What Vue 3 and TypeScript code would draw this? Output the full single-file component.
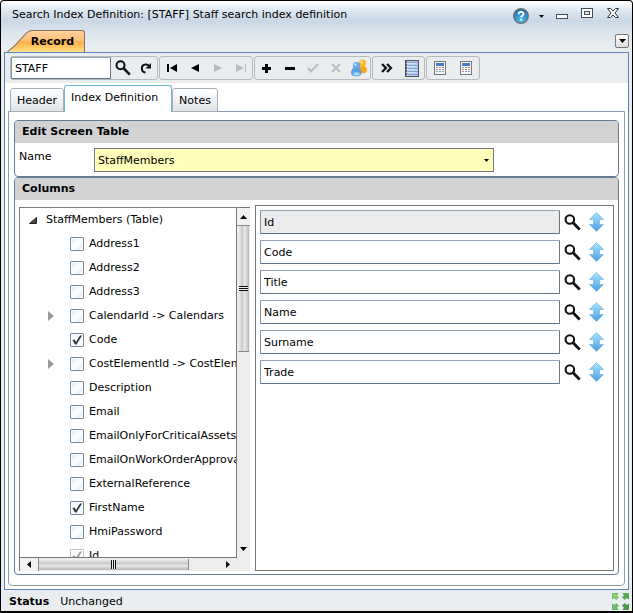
<script setup lang="ts">
import { ref } from 'vue'

interface Column {
  name: string
  checked?: boolean
  expandable?: boolean
  disabled?: boolean
}

const code = ref('STAFF')
const table = ref('StaffMembers')
const tabs = ['Header', 'Index Definition', 'Notes']
const activeTab = ref('Index Definition')

const columns = ref<Column[]>([
  { name: 'Address1' },
  { name: 'Address2' },
  { name: 'Address3' },
  { name: 'CalendarId -> Calendars', expandable: true },
  { name: 'Code', checked: true },
  { name: 'CostElementId -> CostElements', expandable: true },
  { name: 'Description' },
  { name: 'Email' },
  { name: 'EmailOnlyForCriticalAssets' },
  { name: 'EmailOnWorkOrderApproval' },
  { name: 'ExternalReference' },
  { name: 'FirstName', checked: true },
  { name: 'HmiPassword' },
  { name: 'Id', checked: true, disabled: true },
])

const fields = ref(['Id', 'Code', 'Title', 'Name', 'Surname', 'Trade'])
</script>

<template>
  <div class="window">
    <svg class="defs" aria-hidden="true">
      <defs>
        <linearGradient id="arrowFill" x1="0" y1="0" x2="0" y2="1">
          <stop offset="0" stop-color="#a8e6fb" />
          <stop offset="1" stop-color="#4f9be0" />
        </linearGradient>
        <linearGradient id="tabFill" x1="0" y1="0" x2="0" y2="1">
          <stop offset="0" stop-color="#ffd3a2" />
          <stop offset="0.5" stop-color="#ffbe72" />
          <stop offset="0.52" stop-color="#ffad48" />
          <stop offset="1" stop-color="#ffdf80" />
        </linearGradient>
        <radialGradient id="helpFill" cx="0.5" cy="0.8" r="0.8">
          <stop offset="0" stop-color="#4fc0f0" />
          <stop offset="1" stop-color="#1d68ad" />
        </radialGradient>
        <symbol id="lens" viewBox="0 0 16 16">
          <circle cx="5.5" cy="5.2" r="4" fill="none" stroke="#111" stroke-width="2" />
          <path d="M8.5 8.2L14.8 14.6" stroke="#111" stroke-width="2.6" />
        </symbol>
        <symbol id="calc" viewBox="0 0 12 14">
          <rect x="0.5" y="0.5" width="11" height="13" fill="#f6f6f6" stroke="#777" />
          <rect x="2" y="2" width="8" height="3" fill="#4779c4" />
          <g fill="#999">
            <path d="M2 6h2v1h-2zM5 6h2v1h-2zM2 8h2v1h-2zM5 8h2v1h-2zM8 8h2v1h-2zM2 10h2v1h-2zM5 10h2v1h-2zM8 10h2v1h-2z" />
          </g>
          <path d="M8 6h2v1h-2z" fill="#e0563c" />
        </symbol>
      </defs>
    </svg>

    <header class="titlebar">
      <h1>Search Index Definition: [STAFF] Staff search index definition</h1>
      <div class="window-buttons">
        <button type="button" class="help" aria-label="Help">
          <svg width="16" height="16" viewBox="0 0 16 16">
            <circle cx="8" cy="8" r="7.3" fill="url(#helpFill)" stroke="#6b7177" stroke-width="1.4" />
            <path d="M5.6 6.2C5.6 3 10.5 3.2 10.4 6c0 1.7-2.3 1.7-2.3 3.6" fill="none" stroke="#fff" stroke-width="1.8" />
            <path d="M7.1 10.7h2v1.9h-2z" fill="#fff" />
          </svg>
        </button>
        <button type="button" class="help-menu" aria-label="Help menu">
          <svg width="5" height="3" viewBox="0 0 5 3"><path d="M0 0h5L2.5 3z" /></svg>
        </button>
        <button type="button" class="minimise" aria-label="Minimise">
          <svg width="12" height="5" viewBox="0 0 12 5"><rect x="0.5" y="0.5" width="11" height="4" fill="#fff" stroke="#454b5c" /></svg>
        </button>
        <button type="button" class="maximise" aria-label="Maximise">
          <svg width="12" height="10" viewBox="0 0 12 10">
            <rect x="0.5" y="0.5" width="11" height="9" fill="#fff" stroke="#454b5c" />
            <rect x="3.5" y="3.5" width="5" height="3" fill="#dde5ee" stroke="#454b5c" />
          </svg>
        </button>
        <button type="button" class="close" aria-label="Close">
          <svg width="12" height="10" viewBox="0 0 12 10">
            <path d="M.5.5h3L6 3 8.500.5h3L8 5l3.500 4.500h-3L6 7 3.500 9.500h-3L4 5z" fill="#fff" stroke="#30333c" />
          </svg>
        </button>
      </div>
    </header>

    <nav class="record-tabs">
      <button type="button" class="record-tab">
        <svg viewBox="0 0 77 23" preserveAspectRatio="none" aria-hidden="true">
          <path d="M0.500 22.500C5 20 9 15 15 8C19 3 21 0.500 25 0.500H74Q76.500 0.500 76.500 3V23" fill="url(#tabFill)" stroke="#8a6f58" />
        </svg>
        <span>Record</span>
      </button>
      <button type="button" class="tab-menu" aria-label="Open tabs">
        <svg width="7" height="4" viewBox="0 0 7 4"><path d="M0 0h7L3.500 4z" /></svg>
      </button>
    </nav>

    <main class="panel">
      <div class="toolbar">
        <div class="group">
          <input v-model="code" class="box code" aria-label="Code" />
          <button type="button" aria-label="Search"><svg width="16" height="16"><use href="#lens" /></svg></button>
          <button type="button" aria-label="Refresh">
            <svg width="12" height="12" viewBox="0 0 12 12">
              <path d="M5.500 10.500C.800 10 .500 3 5.500 2.400C7.500 2.200 8.500 3.300 9 4.200" fill="none" stroke="#111" stroke-width="2" />
              <path d="M11 1v5.500H5.500z" fill="#111" />
            </svg>
          </button>
        </div>
        <div class="group">
          <button type="button" aria-label="First">
            <svg width="10" height="8" viewBox="0 0 10 8"><path d="M0 0h2v8H0zM10 0v8L3 4z" /></svg>
          </button>
          <button type="button" aria-label="Previous">
            <svg width="8" height="8" viewBox="0 0 8 8"><path d="M8 0v8L0 4z" /></svg>
          </button>
          <button type="button" disabled aria-label="Next">
            <svg width="8" height="8" viewBox="0 0 8 8"><path d="M0 0v8l8-4z" /></svg>
          </button>
          <button type="button" disabled aria-label="Last">
            <svg width="10" height="8" viewBox="0 0 10 8"><path d="M9 0h1v8H9zM0 0v8l8-4z" /></svg>
          </button>
        </div>
        <div class="group">
          <button type="button" aria-label="Add">
            <svg width="9" height="9" viewBox="0 0 9 9"><path d="M3 0h3v3h3v3H6v3H3V6H0V3h3z" /></svg>
          </button>
          <button type="button" aria-label="Remove">
            <svg width="10" height="3" viewBox="0 0 10 3"><path d="M0 0h10v3H0z" /></svg>
          </button>
          <button type="button" disabled aria-label="Accept">
            <svg width="12" height="10" viewBox="0 0 12 10"><path d="M1 5l3 3.500L11 1" fill="none" stroke="#b9bcbe" stroke-width="2" /></svg>
          </button>
          <button type="button" disabled aria-label="Cancel">
            <svg width="10" height="10" viewBox="0 0 10 10"><path d="M1 1l8 8M9 1L1 9" stroke="#b9bcbe" stroke-width="1.800" /></svg>
          </button>
          <button type="button" aria-label="Users">
            <svg width="18" height="18" viewBox="0 0 18 18">
              <path d="M8 13c0-5 2-6 4.500-6S17 8 17 11s-3 3.500-6 3z" fill="#f5a623" />
              <circle cx="12.500" cy="4" r="3.600" fill="#ffb62e" />
              <circle cx="11.700" cy="3" r="1.500" fill="#ffd880" />
              <path d="M1 14c0-4 2-5.500 5-5.500s5.500 1.500 5.500 5.500c0 4.500-10.500 4.500-10.500 0z" fill="#5a9fe4" />
              <path d="M3 15c1-2.500 6-2.500 7 0-1 2.300-6 2.300-7 0z" fill="#a9dcfb" />
              <circle cx="6.500" cy="6.500" r="3.600" fill="#5fa6ea" />
              <circle cx="5.500" cy="5.500" r="1.600" fill="#a8d4fa" />
            </svg>
          </button>
        </div>
        <div class="group wide">
          <button type="button" aria-label="More">
            <svg width="12" height="10" viewBox="0 0 12 10"><path d="M1 1l4 4-4 4M6 1l4 4-4 4" fill="none" stroke="#111" stroke-width="2.200" /></svg>
          </button>
          <button type="button" aria-label="Notebook">
            <svg width="14" height="17" viewBox="0 0 14 17">
              <rect x="0.500" y="0.500" width="13" height="16" fill="#b4cdf0" stroke="#4e5358" />
              <path d="M3 2.500h10M3 5.500h10M3 8.500h10M3 11.500h10M3 14.500h10" stroke="#83a3d3" />
              <path d="M3 3.500h7M3 6.500h7M3 9.500h7M3 12.500h7" stroke="#d9e7fb" />
              <path d="M1.500 1v15" stroke="#555" stroke-dasharray="2 1" />
            </svg>
          </button>
        </div>
        <div class="group wider">
          <button type="button" aria-label="Calculate"><svg width="12" height="14"><use href="#calc" /></svg></button>
          <button type="button" aria-label="Calculate all"><svg width="12" height="14"><use href="#calc" /></svg></button>
        </div>
      </div>

      <div class="tabs" role="tablist">
        <button
          v-for="tab in tabs"
          :key="tab"
          type="button"
          role="tab"
          :aria-selected="tab === activeTab"
          :class="['tab', { active: tab === activeTab }]"
          @click="activeTab = tab"
        >{{ tab }}</button>
      </div>

      <div class="page">
        <section class="card">
          <h2>Edit Screen Table</h2>
          <div class="name-row">
            <label for="table-name">Name</label>
            <div class="select">
              <select id="table-name" v-model="table">
                <option>StaffMembers</option>
              </select>
              <svg width="5" height="3" viewBox="0 0 5 3" aria-hidden="true"><path d="M0 0h5L2.500 3z" /></svg>
            </div>
          </div>
        </section>

        <section class="card grow">
          <h2>Columns</h2>
          <div class="columns">
            <div class="tree">
              <ul class="nodes">
                <li class="root">
                  <svg width="8" height="7" viewBox="0 0 8 7" aria-hidden="true"><path d="M7.500.500v6h-7z" fill="#444" stroke="#222" /></svg>
                  <span>StaffMembers (Table)</span>
                </li>
                <li v-for="column in columns" :key="column.name">
                  <span class="twisty">
                    <svg v-if="column.expandable" width="6" height="10" viewBox="0 0 6 10" aria-hidden="true"><path d="M0 0l6 5-6 5z" fill="#999" /></svg>
                  </span>
                  <label>
                    <input v-model="column.checked" type="checkbox" :disabled="column.disabled" />
                    {{ column.name }}
                  </label>
                </li>
              </ul>
              <div class="scroll vertical" aria-hidden="true">
                <span class="arrow"><svg width="7" height="4" viewBox="0 0 7 4"><path d="M0 4h7L3.500 0z" /></svg></span>
                <span class="thumb"><i></i></span>
                <span class="track"></span>
                <span class="arrow plain"><svg width="7" height="4" viewBox="0 0 7 4"><path d="M0 0h7L3.500 4z" /></svg></span>
              </div>
              <div class="scroll horizontal" aria-hidden="true">
                <span class="arrow"><svg width="4" height="7" viewBox="0 0 4 7"><path d="M4 0v7L0 3.500z" /></svg></span>
                <span class="thumb"><i></i></span>
                <span class="track"></span>
                <span class="arrow plain"><svg width="4" height="7" viewBox="0 0 4 7"><path d="M0 0v7l4-3.500z" /></svg></span>
              </div>
            </div>

            <div class="fields">
              <div v-for="(field, i) in fields" :key="i" class="field">
                <input v-model="fields[i]" class="box" :readonly="i === 0" :aria-label="'Column ' + (i + 1)" />
                <button type="button" aria-label="Find column"><svg width="17" height="17"><use href="#lens" /></svg></button>
                <button type="button" class="move" aria-label="Move column">
                  <svg width="15" height="20" viewBox="0 0 15 20">
                    <path d="M7.500.500L14.500 7.500H10.500V12.500H14.500L7.500 19.500L.500 12.500H4.500V7.500H.500z" fill="url(#arrowFill)" stroke="#78bce6" stroke-width="0.800" />
                  </svg>
                </button>
              </div>
            </div>
          </div>
        </section>
      </div>
    </main>

    <footer class="status">
      <strong>Status</strong>
      <span>Unchanged</span>
      <button type="button" aria-label="Full screen">
        <svg width="17" height="17" viewBox="0 0 17 17" stroke-width="0.600">
          <path d="M.500.500h5.500L4.500 2.200l2 2L4.200 6.500l-2-2L.500 6z" fill="#7cd46c" stroke="#4ca04a" />
          <path d="M16.500.500v5.500l-1.700-1.500-2 2L10.500 4.200l2-2L11 .500z" fill="#55ad52" stroke="#38833c" />
          <path d="M.500 16.500V11l1.700 1.500 2-2 2.300 2.300-2 2L6 16.500z" fill="#6fc267" stroke="#43924a" />
          <path d="M16.500 16.500H11l1.500-1.700-2-2 2.300-2.300 2 2L16.500 11z" fill="#459a49" stroke="#2b6f35" />
        </svg>
      </button>
    </footer>
  </div>
</template>

<style>
html,
body,
#app {
  height: 100%;
  margin: 0;
}
</style>

<style scoped>
* {
  box-sizing: border-box;
}

.window {
  height: 100%;
  min-height: 480px;
  display: flex;
  flex-direction: column;
  padding: 0 3px;
  border: 1px solid #000;
  border-bottom-width: 2px;
  border-radius: 4px 4px 0 0;
  background: linear-gradient(#fff 0, #dce6f0 10px, #c9d7e5 20px, #dbe4ec 30px, #e9edf0 46px);
  font: 11px/14px "DejaVu Sans", Verdana, sans-serif;
  color: #000;
  overflow: hidden;
}

.defs {
  position: absolute;
  width: 0;
  height: 0;
}

svg {
  display: block;
}

button,
input,
select {
  margin: 0;
  font: inherit;
  color: inherit;
}

button {
  display: flex;
  align-items: center;
  justify-content: center;
  padding: 0;
  border: 0;
  background: none;
}

h1,
h2 {
  margin: 0;
  font-size: 11px;
}

.titlebar {
  display: flex;
  justify-content: space-between;
  height: 29px;
  flex: none;
  padding: 7px 10px 0 8px;
}

h1 {
  font-weight: normal;
  white-space: nowrap;
}

.window-buttons {
  display: flex;
  align-items: flex-start;
}

.help-menu {
  margin: 7px 12px 0 10px;
}

.minimise {
  margin: 6px 13px 0 0;
}

.maximise {
  margin: 0 14px 0 0;
}

.record-tabs {
  display: flex;
  justify-content: space-between;
  align-items: flex-end;
  flex: none;
  height: 22px;
  padding-left: 3px;
}

.record-tab {
  position: relative;
  width: 78px;
  height: 22px;
  padding: 2px 0 0 13px;
  font-weight: bold;
}

.record-tab svg {
  position: absolute;
  inset: 0;
  width: 100%;
  height: 100%;
}

.record-tab span {
  position: relative;
}

.tab-menu {
  align-self: center;
  width: 14px;
  height: 14px;
  border: 1px solid #777;
  border-radius: 2px;
  background: linear-gradient(#fff, #ddd);
}

.panel {
  flex: 1;
  min-height: 0;
  display: flex;
  flex-direction: column;
  border: 1px solid #5b85bd;
  background: #fff;
}

.toolbar {
  display: flex;
  flex: none;
  gap: 1px;
  padding: 3px 5px;
  background: #e9edf0;
}

.group {
  display: flex;
  align-items: center;
  height: 24px;
  border: 1px solid #b6b9bc;
  border-radius: 3px;
}

.group button {
  width: 23px;
  height: 22px;
}

.group.wide {
  padding-left: 1px;
}

.group.wide button {
  width: 25px;
}

.group.wider button {
  width: 26px;
}

.group button:disabled {
  fill: #b9bcbe;
}

.box {
  min-width: 0;
  height: 24px;
  padding: 1px 3px;
  border: 1px solid;
  border-color: #96a5b3 #667a8c #5f7488 #8293a3;
  border-radius: 1px;
  background: #fff;
  outline: 0;
}

.box[readonly] {
  background: #ebebeb;
}

.group .code {
  width: 100px;
  height: 22px;
  padding-top: 2px;
}

.tabs {
  display: flex;
  align-items: flex-end;
  flex: none;
  height: 29px;
  padding: 0 5px;
  margin-bottom: -1px;
  position: relative;
}

.tab {
  height: 24px;
  padding: 2px 6px 0;
  border: 1px solid #a6b0b9;
  border-radius: 3px 3px 0 0;
  background: linear-gradient(#fff, #e0e4e8);
}

.tab.active {
  height: 27px;
  padding: 0 13px 2px 6px;
  border-color: #6cbccc;
  border-bottom: 0;
  background: #fff;
}

.page {
  flex: 1;
  min-height: 0;
  display: flex;
  flex-direction: column;
  margin: 0 3px 3px;
  padding: 8px 5px 10px;
  border: 1px solid #8c9cab;
  border-radius: 0 0 4px 4px;
}

.card {
  flex: none;
  border: 1px solid #647d94;
  border-radius: 4px;
}

.card.grow {
  flex: 1;
  min-height: 0;
  display: flex;
  flex-direction: column;
}

h2 {
  flex: none;
  height: 22px;
  padding: 0 7px;
  line-height: 22px;
  border-radius: 3px 3px 0 0;
  background: #d2d2d2;
}

.name-row {
  display: flex;
  padding: 5px 4px 4px;
}

.name-row label {
  width: 75px;
  padding-top: 2px;
}

.select {
  position: relative;
  width: 400px;
}

select {
  display: block;
  width: 100%;
  height: 24px;
  padding: 1px 3px 0;
  border: 1px solid #777;
  border-radius: 0;
  appearance: none;
  background: #ffffba;
}

.select svg {
  position: absolute;
  right: 5px;
  top: 11px;
  pointer-events: none;
}

.columns {
  flex: 1;
  min-height: 0;
  display: flex;
  gap: 5px;
  padding: 5px 4px 3px;
}

.tree {
  display: grid;
  grid-template: minmax(0, 1fr) 13px / minmax(0, 1fr) 13px;
  width: 231px;
  margin-top: 2px;
  border: 1px solid #777;
  border-right: 0;
  border-bottom: 0;
  background: #ededed;
}

.nodes {
  margin: 0;
  padding: 0;
  list-style: none;
  overflow: hidden;
  border: solid #777;
  border-width: 0 1px 1px 0;
  background: #fff;
  box-shadow: 1px 1px 2px #bbb;
}

.nodes li {
  display: flex;
  align-items: center;
  height: 24px;
  white-space: nowrap;
}

.nodes .root {
  gap: 9px;
  padding-left: 9px;
}

.twisty {
  flex: none;
  width: 22px;
  margin-left: 28px;
}

.nodes label {
  display: flex;
  align-items: center;
  gap: 5px;
}

.nodes input {
  flex: none;
  width: 14px;
  height: 14px;
  appearance: none;
  border: 1px solid #71869a;
  border-radius: 1px;
  background: linear-gradient(135deg, #dfe8f1, #fff 50%, #d6e4f0);
  box-shadow: inset 0 0 0 1px #fff;
}

.nodes input:checked {
  background: url("data:image/svg+xml,%3Csvg xmlns='http://www.w3.org/2000/svg' viewBox='0 0 12 12'%3E%3Cpath d='M1.500 6l2-.5L5 8 9 1.500h2L5.500 10.500H4z' fill='%23333'/%3E%3C/svg%3E") #f6f9fc;
}

.nodes input:disabled {
  opacity: 0.5;
}

.scroll {
  display: flex;
  overflow: hidden;
  background: #ededed;
}

.scroll.vertical {
  flex-direction: column;
}

.scroll span {
  display: flex;
  align-items: center;
  justify-content: center;
}

.arrow {
  flex: none;
  background: #f2f2f2;
}

.vertical .arrow {
  height: 18px;
  border-bottom: 1px solid #888;
}

.horizontal .arrow {
  width: 19px;
  border-right: 1px solid #888;
}

.scroll .plain {
  border: 0;
  background: none;
}

.vertical .thumb {
  flex: 0 0 36%;
  margin: 0 1px;
  background: linear-gradient(90deg, #f2f2f2, #c6c6c6 45%, #efefef 55%, #b8b8b8);
  border-bottom: 1px solid #888;
}

.horizontal .thumb {
  flex: 0 0 69%;
  margin: 1px 0;
  background: linear-gradient(#f2f2f2, #c6c6c6 45%, #ededed 55%, #b8b8b8);
  border-right: 1px solid #888;
}

.vertical i {
  width: 9px;
  height: 5px;
  background: repeating-linear-gradient(#111 0 1px, #eee 1px 2px);
}

.horizontal i {
  width: 5px;
  height: 9px;
  background: repeating-linear-gradient(90deg, #111 0 1px, #eee 1px 2px);
}

.track {
  flex: 1;
}

.fields {
  flex: 1;
  min-width: 0;
  display: flex;
  flex-direction: column;
  gap: 6px;
  padding: 4px;
  border: 1px solid #777;
}

.field {
  display: flex;
  align-items: center;
}

.field .box {
  flex: 1;
}

.field button {
  flex: none;
  width: 24px;
  height: 24px;
}

.field .move {
  margin-right: 1px;
}

.status {
  display: flex;
  align-items: center;
  gap: 11px;
  flex: none;
  height: 21px;
  padding: 2px 0 0 5px;
}

.status button {
  margin-left: auto;
}
</style>
